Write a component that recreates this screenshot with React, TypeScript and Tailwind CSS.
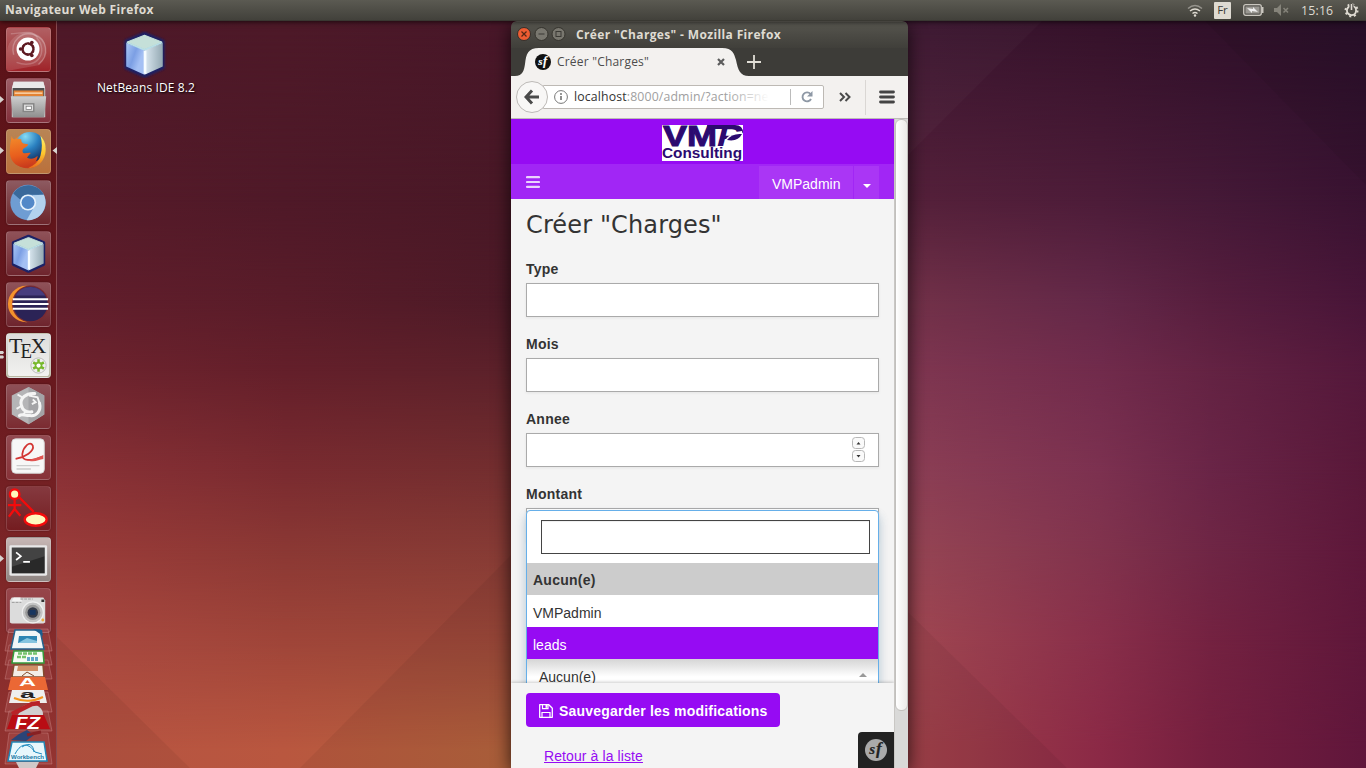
import React from 'react';

const ui = "font-['Open_Sans','Noto_Sans',sans-serif]";
const helv = "font-['Liberation_Sans',Arial,sans-serif]";

function Cube() {
  return (
    <svg viewBox="0 0 45 45" className="h-full w-full">
      <defs>
        <linearGradient id="cubeL" x2=".8" y2=".5"><stop stopColor="#a9c6f5" /><stop offset=".6" stopColor="#7c9fe4" /><stop offset="1" stopColor="#a4c0f4" /></linearGradient>
        <linearGradient id="cubeR"><stop stopColor="#dce9f2" /><stop offset="1" stopColor="#93a8b2" /></linearGradient>
        <filter id="cubeSoft" x="-.2" y="-.2" width="1.4" height="1.4"><feGaussianBlur stdDeviation=".9" /></filter>
      </defs>
      <path d="M22.500 2.500 40 10v25L22.500 43 5 35V10Z" fill="#1b2166" stroke="#1b2166" strokeWidth="3.500" strokeLinejoin="round" filter="url(#cubeSoft)" />
      <path d="M22.500 4 39 10.500 22.500 17.500 6 10.500Z" fill="#c5e0d9" stroke="#c5e0d9" strokeLinejoin="round" />
      <path d="M5 11.500 22.500 18v24L5 34Z" fill="url(#cubeL)" />
      <path d="M40 11.500 22.500 18v24L40 34Z" fill="url(#cubeR)" />
      <path d="M5.500 11 22.500 18 39.500 11" stroke="#b9dfe6" strokeWidth="1.500" fill="none" />
      <path d="M23 19v22" stroke="#f6fcff" strokeWidth="2.600" fill="none" />
    </svg>
  );
}

function UbuntuLogo() {
  return (
    <svg viewBox="0 0 45 45" className="h-full w-full">
      <path d="M0 45V30C-2 12 14 0 30 6c14 6 14 24 3 33Z" fill="#fff" opacity=".13" />
      <path d="M7 28C3 13 16 3 28 7c14 4 17 22 5 31" fill="none" stroke="#fff" strokeOpacity=".25" strokeWidth="1.500" />
      <path d="M10 36C32 44 44 25 31 10M4 6c9 0 22-5 28 4" fill="none" stroke="#fff" strokeOpacity=".2" strokeWidth="1.500" />
      <circle cx="22" cy="22" r="12" fill="#fff" />
      <circle cx="22" cy="22" r="5.700" fill="none" stroke="#5e1a22" strokeWidth="2.600" />
      <path d="m22 22-9 0M22 22l4.600-8M22 22l4.600 8" stroke="#fff" strokeWidth="5.500" />
      <circle cx="22" cy="22" r="4.300" fill="#fff" />
      <circle cx="22" cy="22" r="5.700" fill="none" stroke="#5e1a22" strokeWidth="2.600" strokeDasharray="8 3.940" transform="rotate(20 22 22)" />
      <circle cx="14.200" cy="22" r="1.900" fill="#5e1a22" />
      <circle cx="26" cy="15.200" r="1.900" fill="#5e1a22" />
      <circle cx="26" cy="28.800" r="1.900" fill="#5e1a22" />
    </svg>
  );
}

function Files() {
  return (
    <svg viewBox="0 0 45 45" className="h-full w-full">
      <path d="M7 3h31l2 8v29H5V11Z" fill="#d3d3d3" />
      <path d="M7 3h31l2 7H5Z" fill="#e9e9e9" />
      <path d="M6 9.500h33v9H6z" fill="#4f4f4f" />
      <path d="M7 12h31v6H7z" fill="#e38334" />
      <path d="M8 14h29v1.500H8z" fill="#ffe3c0" />
      <path d="M4 18h37l-2 22H6Z" fill="url(#filesG)" />
      <rect x="17" y="26" width="11" height="8" fill="#ddd" stroke="#858585" strokeWidth="1.500" />
      <rect x="20" y="28.500" width="5.500" height="3.500" fill="#fff" stroke="#777" strokeWidth=".8" />
      <defs><linearGradient id="filesG" x2="0" y2="1"><stop stopColor="#cfcfcf" /><stop offset="1" stopColor="#8f8f8f" /></linearGradient></defs>
    </svg>
  );
}

function Firefox() {
  return (
    <svg viewBox="0 0 45 45" className="h-full w-full">
      <defs>
        <radialGradient id="ffBlue" cx=".35" cy=".15" r=".95"><stop stopColor="#86dcf4" /><stop offset=".45" stopColor="#2a80c0" /><stop offset="1" stopColor="#10204e" /></radialGradient>
        <linearGradient id="ffOr" x1=".3" y1="0" x2=".5" y2="1"><stop stopColor="#f28a2a" /><stop offset=".6" stopColor="#e85e1d" /><stop offset="1" stopColor="#c93a1c" /></linearGradient>
        <linearGradient id="ffYe" x1="0" y1="0" x2="0" y2="1"><stop stopColor="#fff06a" /><stop offset=".55" stopColor="#fdc52e" /><stop offset="1" stopColor="#e96a1c" /></linearGradient>
      </defs>
      <circle cx="21.500" cy="22" r="18" fill="url(#ffOr)" />
      <circle cx="24" cy="18" r="16" fill="url(#ffBlue)" />
      <path d="M35 6c5 5 6.500 12 5 19-2 9-9 15-18 15 6-3 11-6 13-13 2-8 2-14 0-21Z" fill="url(#ffYe)" />
      <path d="M5 6c0 2 1.500 4 4 4 2-1 4-1 6 0 0 2 0 3 2 4l5 1c0 2-2 3-5 4.500-1 2-1 3 0 4.500 3 1 5-1 8 0-2 2-3 3-4 5 4 2 8 1 11-2 0 6-5 11-12 12C9 40 2 31 3 21c0-6 1-9 2-15Z" fill="url(#ffOr)" />
    </svg>
  );
}

function Chromium() {
  return (
    <svg viewBox="0 0 45 45" className="h-full w-full">
      <circle cx="22" cy="22.500" r="18.500" fill="#6f9dd3" />
      <path d="M6.500 13a18.500 18.500 0 0 1 32 1.500H22c-4 0-7 2-8 5Z" fill="#39699b" />
      <path d="M38.500 14.500a18.500 18.500 0 0 1-18 26.500l8-14c2-4 1-8-2-12Z" fill="#b2d2ee" />
      <circle cx="22" cy="22.500" r="8.500" fill="#e8f3fc" />
      <circle cx="22" cy="22.500" r="6.800" fill="#5288c8" />
    </svg>
  );
}

function Eclipse() {
  return (
    <svg viewBox="0 0 45 45" className="h-full w-full">
      <circle cx="20" cy="22" r="19" fill="#f4922c" />
      <circle cx="24.500" cy="22" r="19.300" fill="#7a2a32" />
      <circle cx="24.500" cy="22" r="18" fill="#2b2356" />
      <path d="M9 13a18 18 0 0 1 31 0Z" fill="#6a5db0" opacity=".45" />
      <path d="M6 17h37M5.500 22h38M6 27h37" stroke="#fff" strokeWidth="2.200" />
    </svg>
  );
}

function Tex() {
  return (
    <svg viewBox="0 0 45 45" className="h-full w-full">
      <rect x="1" y="1" width="43" height="43" rx="3" fill="url(#texG)" />
      <text x="2" y="20" fontFamily="Liberation Serif, serif" fontSize="23" fill="#222">T</text>
      <text x="14" y="25" fontFamily="Liberation Serif, serif" fontSize="21" textLength="12" lengthAdjust="spacingAndGlyphs" fill="#222">E</text>
      <text x="24.500" y="20" fontFamily="Liberation Serif, serif" fontSize="23" fill="#222">X</text>
      <circle cx="33" cy="33" r="8" fill="#eee" stroke="#bbb" />
      <g stroke="#78b82d" strokeWidth="2.600"><path d="M33 26.500v13M27.400 29.700l11.200 6.600M27.400 36.300l11.200-6.600" /></g>
      <circle cx="33" cy="33" r="4" fill="#77b82c" /><circle cx="33" cy="33" r="2.200" fill="#fff" />
      <defs><linearGradient id="texG" x2="0" y2="1"><stop stopColor="#dededc" /><stop offset="1" stopColor="#f1f1ef" /></linearGradient></defs>
    </svg>
  );
}

function Gecko() {
  return (
    <svg viewBox="0 0 45 45" className="h-full w-full">
      <path d="M22.500 2 39 11v20L22.500 41 5 31V11Z" fill="#b5b5b7" />
      <path d="M22.500 2 39 11v20L22.500 41Z" fill="#a3a3a6" />
      <path d="M29 9c-9-1-16 5-14 12 1 6 6 8 11 7M34 19c2 8-3 14-10 13-6 0-9-2-11 0" fill="none" stroke="#f4f4f4" strokeWidth="3.200" strokeLinecap="round" />
      <path d="m16 13-5-3M15 22l-5 3M20 27l-3 4M23 11l9 2 2 6M26 20l4-2-3-3" stroke="#f4f4f4" strokeWidth="2" fill="none" />
    </svg>
  );
}

function Evince() {
  return (
    <svg viewBox="0 0 45 45" className="h-full w-full">
      <rect x="5" y="3" width="34" height="36" rx="4" fill="#f7f7f7" stroke="#d4d4d4" />
      <path d="M9 24c10-2 20-8 18-14-3-6-10 2-11 9-1 8 10 7 20 3" fill="none" stroke="#d33634" strokeWidth="1.800" />
      <path d="M20 25c8 0 14-3 18-5v4c-5 1-10 4-18 1Z" fill="#e05451" />
      <path d="M10 31h24M10 34.500h15" stroke="#ccc" strokeWidth="1.500" />
    </svg>
  );
}

function StickTool() {
  return (
    <svg viewBox="0 0 45 45" className="h-full w-full">
      <g stroke="#f40b0b" strokeWidth="2.400" fill="none"><path d="M8 12v12M1 19h14M8 23l-6 8M8 23l6 7M13 11l15 15" /></g>
      <circle cx="8" cy="7.500" r="5" fill="#fff8bd" stroke="#f40b0b" strokeWidth="2.500" />
      <ellipse cx="30" cy="34" rx="11.500" ry="6.500" fill="#fff8bd" stroke="#f40b0b" strokeWidth="2.500" />
    </svg>
  );
}

function Terminal() {
  return (
    <svg viewBox="0 0 45 45" className="h-full w-full">
      <rect x="2.500" y="7.500" width="39.500" height="32" rx="1.500" fill="#e8e8e8" />
      <rect x="5" y="10" width="34.500" height="27" fill="#292929" />
      <path d="M5 10h34.500v9L5 30Z" fill="#fff" opacity=".12" />
      <path d="m9.500 15 5 4-5 4M17 25h7" fill="none" stroke="#fff" strokeWidth="1.800" />
    </svg>
  );
}

function Camera() {
  return (
    <svg viewBox="0 0 45 45" className="h-full w-full">
      <path d="m3 12 2-3h33l2 3v23l-2 1H5l-2-1Z" fill="#dcdcdc" />
      <path d="M7 9h7l2 4H5Z" fill="#f3f3f3" />
      <path d="M14 10.500h13M5 14h10" stroke="#999" strokeWidth="1" strokeDasharray="3 1" />
      <circle cx="27" cy="24.500" r="11" fill="#c5c5c5" stroke="#f0f0f0" strokeWidth="1.200" />
      <circle cx="27" cy="24.500" r="8" fill="#999" /><circle cx="27" cy="24.500" r="5.500" fill="#343a48" /><rect x="24" y="22" width="6" height="5" fill="#17355f" />
      <circle cx="37.500" cy="32.500" r="1.500" fill="#edab40" /><path d="M36 11h3v2.500h-3z" fill="#333" />
    </svg>
  );
}

const tile = 'mx-auto mb-[6px] h-[45px] w-[45px] shrink-0 overflow-hidden rounded-[4px] border border-[#ffffff26] bg-gradient-to-b shadow-[0_0_2px_#0005]';

function Launcher() {
  return (
    <aside className="relative flex h-full w-[57px] shrink-0 flex-col border-r border-[#8a4b51] bg-gradient-to-b from-[#5b1218] via-[#66171d] via-45% to-[#943431] pt-[6px]">
      <div className={`${tile} from-[#b16064] to-[#9f2229]`}><UbuntuLogo /></div>
      <div className={`${tile} from-[#9c5d66] to-[#822f3b]`}><Files /></div>
      <div className={`${tile} from-[#b88555] to-[#ba703b]`}><Firefox /></div>
      <div className={`${tile} from-[#8d5a61] to-[#6c242a]`}><Chromium /></div>
      <div className={`${tile} from-[#8f5259] to-[#6e242d] p-[2px]`}><Cube /></div>
      <div className={`${tile} from-[#8f5259] to-[#6e242d]`}><Eclipse /></div>
      <div className={`${tile} from-[#dedede] to-[#b9b8a2]`}><Tex /></div>
      <div className={`${tile} from-[#8d5057] to-[#7b2b31]`}><Gecko /></div>
      <div className={`${tile} from-[#924a51] to-[#873238]`}><Evince /></div>
      <div className={`${tile} from-[#85393f] to-[#741c20]`}><StickTool /></div>
      <div className={`${tile} from-[#c7b7b5] to-[#8f8582]`}><Terminal /></div>
      <div className={`${tile} from-[#96454a] to-[#8c383e]`}><Camera /></div>
      <svg viewBox="0 0 57 140" className="absolute bottom-0 left-0 h-[140px] w-[57px]">
        <g fill="#d98384" fillOpacity=".18" stroke="#e5aaa9" strokeOpacity=".3"><path d="M9 1h39l4 22H5zM9 17h39l4 20H5zM9 32h39l4 19H5zM9 64h39l4 20H5zM9 83h39l4 20H5zM9 105h39l4 31H5z" /></g>
        <path d="M15 2h25l4 19H11Z" fill="#f0f5f7" stroke="#24638e" strokeWidth="1.500" /><path d="m33 1 10 7-1-6Z" fill="#1a5d8f" /><path d="M19 8h18v7H18z" fill="#2d85b4" /><path d="m18 15 9-5 10 3v2Z" fill="#86c4df" />
        <path d="M14 23h29l1 12H12Z" fill="#f6fbf3" stroke="#329c3b" strokeWidth="1.500" /><path d="M18 25.500h19M17 29h9" stroke="#74c26c" strokeWidth="2.600" strokeDasharray="4 1" /><path d="M27 31h11" stroke="#62a5c9" strokeWidth="4" strokeDasharray="3 1" />
        <path d="M14 37h29l1 12H12Z" fill="#f3eee7" stroke="#844b2d" strokeWidth="1.500" /><path d="M18 38h20v5H17z" fill="#d29068" /><path d="m22 48 5-4 7 4" stroke="#844b2d" fill="none" />
        <path d="M11 49h34l3 13H8Z" fill="#eb6835" /><text x="19" y="58" fontFamily="Liberation Sans" fontWeight="bold" fontSize="11" textLength="17" lengthAdjust="spacingAndGlyphs" fill="#fff">A</text>
        <path d="M12 62h32l3 13H9Z" fill="#eee" /><text x="20" y="69.500" fontFamily="Liberation Sans" fontWeight="bold" fontSize="10" textLength="15" lengthAdjust="spacingAndGlyphs" fill="#222">a</text><path d="M14 70q14 6 29-1" stroke="#f39420" strokeWidth="2" fill="none" />
        <path d="M22 79c8-7 22-1 21 8H18Z" fill="#d1cfd0" /><path d="m12 86 20-10 8-1" stroke="#b82228" strokeWidth="4.500" fill="none" />
        <path d="M12 87h32l6 14H7Z" fill="#b90d14" /><text x="15" y="101" fontFamily="Liberation Sans" fontWeight="bold" fontStyle="italic" fontSize="17" textLength="25" lengthAdjust="spacingAndGlyphs" fill="#fff">FZ</text>
        <path d="m11 112 8-6 8-4 7 5-8 6Z" fill="#294477" /><path d="m27 107 14-3" stroke="#872023" strokeWidth="3" />
        <path d="M12 114h32l3 19H8Z" fill="#e8f7fc" stroke="#2186b5" strokeWidth="1.500" /><path d="M15 126c7-13 14-10 20-2l7 2M22 119c8-5 11-2 12 5" stroke="#1988be" strokeWidth="1" fill="none" />
        <text x="11" y="131" fontFamily="Liberation Sans" fontWeight="bold" fontSize="5" textLength="33" lengthAdjust="spacingAndGlyphs" fill="#1777a5">Workbench</text>
        <path d="M16 134h23l-3 6H19Z" fill="#d0c9c8" />
      </svg>
      <svg viewBox="0 0 57 560" className="absolute left-0 top-0 h-[560px] w-[57px]" fill="#d7d3cf">
        <path d="M0 75v7l4-3.500ZM0 126v7l4-3.500ZM57 126v7l-4.500-3.500ZM0 534v7l4-3.500ZM0 330h3l1 1.500-1 1.500H0ZM0 334.500h3l1 1.500-1 1.500H0Z" />
      </svg>
    </aside>
  );
}

function TopBar() {
  return (
    <header className={`${ui} flex h-[21px] w-full items-center justify-between border-b border-[#393832] bg-gradient-to-b from-[#5b5a52] to-[#42413b] pl-[5px] pr-[7px] text-[12.5px] text-[#dfdbd2] shadow-[0_1px_5px_#000a]`}>
      <span className="text-[12px] font-bold leading-[20px] tracking-[0.330px]">Navigateur Web Firefox</span>
      <div className="flex items-center">
        <svg width="16" height="13" viewBox="0 0 16 13" fill="none" strokeWidth="1.500"><path d="M1 4.500q7-6 14 0" stroke="#96948d" /><path d="M3 7q5-4 10 0M5.500 9.500q2.500-2 5 0" stroke="#dfdbd2" /><circle cx="8" cy="11.500" r="1.200" fill="#dfdbd2" /></svg>
        <span className="ml-[11px] flex h-[17px] w-[17px] items-center justify-center rounded-[1px] bg-[#dfdbd2] text-[11.500px] text-[#3c3b37]">Fr</span>
        <svg className="ml-[12px]" width="21" height="12" viewBox="0 0 21 12"><rect x=".7" y=".7" width="17.600" height="10.600" rx="2" fill="#55534e" stroke="#c9c6be" strokeWidth="1.300" /><rect x="2.500" y="2.500" width="14" height="7" fill="#999791" /><path d="m4 4 6 1V3l5 5-6-1v2Z" fill="#eee" /><path d="M19 3v6h1.500V3Z" fill="#c9c6be" /></svg>
        <svg className="ml-[10px]" width="16" height="12" viewBox="0 0 16 12"><path d="M0 4h3l4-4v12L3 8H0Z" fill="#85837a" /><path d="m9.500 4 4.500 4.500m0-4.500L9.500 8.500" stroke="#85837a" strokeWidth="1.500" /></svg>
        <span className="ml-[11px] w-[33px] pt-px text-[12.300px] leading-[20px] tracking-[0.200px]">15:16</span>
        <svg className="ml-[10px]" width="15" height="15" viewBox="0 0 15 15"><circle cx="7.500" cy="7.500" r="4.600" fill="none" stroke="#dfdbd2" strokeWidth="1.800" /><circle cx="7.500" cy="7.500" r="6" fill="none" stroke="#dfdbd2" strokeWidth="2" strokeDasharray="2 2.710" /><path d="M5.500 1h4v5h-4z" fill="#4c4b45" /><path d="M7.500 1v6" stroke="#dfdbd2" strokeWidth="1.600" /></svg>
      </div>
    </header>
  );
}

function Symfony({ size, bg, fg }: { size: number; bg: string; fg: string }) {
  return (
    <svg width={size} height={size} viewBox="0 0 22 22">
      <circle cx="11" cy="11" r="11" fill={bg} />
      <text x="4.300" y="15" fontFamily="Liberation Serif, serif" fontStyle="italic" fontWeight="bold" fontSize="17" fill={fg} stroke={fg} strokeWidth=".2">
        <tspan fontSize="15">s</tspan><tspan dx=".8" fontSize="17">f</tspan>
      </text>
    </svg>
  );
}

function Chrome() {
  return (
    <>
      <div className={`${ui} flex h-[27px] items-center rounded-t-[5px] border-t border-[#706e65] bg-gradient-to-b from-[#57564f] to-[#403f3a] pl-[6px]`}>
        <svg width="50" height="14" viewBox="0 0 50 14" className="-mt-[2px]">
          <circle cx="7" cy="7" r="6.500" fill="#ee5c32" stroke="#33302d" /><path d="m4.500 4.500 5 5m0-5-5 5" stroke="#542715" strokeWidth="1.200" />
          <circle cx="24.500" cy="7" r="6.500" fill="#79776f" stroke="#37352f" /><path d="M21.500 7h6" stroke="#3a3934" strokeWidth="1.200" />
          <circle cx="41.500" cy="7" r="6.500" fill="#79776f" stroke="#37352f" /><rect x="39" y="4.500" width="5" height="5" fill="none" stroke="#3a3934" />
        </svg>
        <span className="ml-[9px] text-[12px] font-bold leading-[20px] tracking-[0.360px] text-[#dfdbd2]">Créer "Charges" - Mozilla Firefox</span>
      </div>
      <div className={`${ui} relative h-[28px] bg-[#3d3c38]`}>
        <svg className="absolute left-0 top-0" width="250" height="28" viewBox="0 0 250 28"><path d="M0 28H4C12 28 13 22 14 16C15 6 17 0 28 0H211C222 0 223 6 225 12C227 22 229 28 238 28Z" fill="#f3f1ef" /></svg>
        <div className="relative flex h-[27px] items-center pl-[24px]">
          <Symfony size={16} bg="#111" fg="#fff" />
          <span className="ml-[6px] w-[160px] text-[12px] tracking-[0.200px] text-[#4c4c4c]">Créer "Charges"</span>
          <svg width="8" height="8" viewBox="0 0 8 8"><path d="m1 1 6 6m0-6L1 7" stroke="#5c5c5c" strokeWidth="2.200" /></svg>
          <svg className="ml-[22px]" width="14" height="14" viewBox="0 0 14 14"><path d="M7 0v14M0 7h14" stroke="#e1ded6" strokeWidth="1.800" /></svg>
        </div>
      </div>
      <div className={`${ui} flex h-[43px] items-center border-b border-[#bdbab7] bg-[#f3f1ef] pl-[5px]`}>
        <div className="z-10 flex h-[32px] w-[32px] shrink-0 items-center justify-center rounded-full border border-[#bdbab7] bg-[#f8f7f6]">
          <svg width="16" height="16" viewBox="0 0 16 16"><path d="M8 1.500 2 8l6 6.500M2 8h13" fill="none" stroke="#4a4a4a" strokeWidth="3" /></svg>
        </div>
        <div className="-ml-[5px] flex h-[24px] w-[281px] shrink-0 items-center rounded-r-[2px] border border-[#bdb9b4] bg-white pl-[10px]">
          <svg width="14" height="14" viewBox="0 0 14 14"><circle cx="7" cy="7" r="6.400" fill="none" stroke="#777" /><path d="M7 6v4" stroke="#666" strokeWidth="1.500" /><circle cx="7" cy="4" r=".9" fill="#666" /></svg>
          <div className="relative ml-[6px] w-[195px] overflow-hidden whitespace-nowrap pt-px text-[12.300px] tracking-[0.140px] text-[#a0a0a0]"><span className="text-[#333]">localhost</span>:8000/admin/?action=ne<span className="absolute inset-y-0 right-0 w-[42px] bg-gradient-to-r from-transparent to-white" /></div>
          <span className="ml-[21px] h-[16px] w-px bg-[#bbb]" />
          <svg className="ml-[10px]" width="12" height="12" viewBox="0 0 12 12"><path d="M10 8a4.500 4.500 0 1 1-.5-5" fill="none" stroke="#8e98a5" strokeWidth="1.900" /><path d="M11.500 0v5.500H6Z" fill="#8e98a5" /></svg>
        </div>
        <svg className="ml-[15px]" width="12" height="10" viewBox="0 0 12 10"><path d="m1 1 4 4-4 4M6.500 1l4 4-4 4" fill="none" stroke="#4a4a4a" strokeWidth="2" /></svg>
        <span className="ml-[14px] h-[35px] w-px bg-[#dad7d4]" />
        <svg className="ml-[13px]" width="16" height="14" viewBox="0 0 16 14"><path d="M1.500 2h13M1.500 7h13M1.500 12h13" stroke="#444" strokeWidth="2.800" strokeLinecap="round" /></svg>
      </div>
    </>
  );
}

function Logo() {
  return (
    <svg width="81" height="36" viewBox="0 0 81 36" className="bg-white">
      <g fontFamily="Liberation Sans, sans-serif" fontWeight="bold" fill="#2c0a70">
        <text x="1" y="21" fontSize="30" textLength="54" lengthAdjust="spacingAndGlyphs" stroke="#2c0a70">VM</text>
        <text x="55" y="21" fontSize="30" fontStyle="italic" textLength="25" lengthAdjust="spacingAndGlyphs">P</text>
        <path d="M45 0h28q8 0 8 8l-3-2q-3-2-8-2H46Z" />
        <path d="M63 17q3-10 17-11v8q-6 7-17 3Z" fill="#fff" />
        <path d="M65 15q5-7 15-6-4 8-15 6Z" />
        <text x="0" y="32.500" fontSize="14.500" textLength="80" lengthAdjust="spacingAndGlyphs">Consulting</text>
      </g>
    </svg>
  );
}

function SaveIcon() {
  return (
    <svg width="14" height="14" viewBox="0 0 14 14" className="mr-[6px] shrink-0">
      <path d="M.7.7h9.100L13.300 4.200v9.100H.7Z" fill="none" stroke="#fff" strokeWidth="1.300" strokeLinejoin="round" />
      <path d="M3.500.7v4h5.500v-4M3 13.300V8.500h8v4.800" fill="none" stroke="#fff" strokeWidth="1.200" />
      <path d="M6.500 1h1.800v2.800H6.500Z" fill="#fff" />
    </svg>
  );
}

function Field({ label, number }: { label: string; number?: boolean }) {
  return (
    <div className="h-[75px]">
      <label className="block h-[25px] pt-px text-[14px] font-bold leading-[20px] tracking-[0.250px] text-[#333]">{label}</label>
      <div className="flex h-[34px] items-center justify-end border border-[#aaa] bg-white pr-[13px] shadow-[0_1px_3px_#0001]">
        {number && (
          <svg width="13" height="26" viewBox="0 0 13 26"><rect x=".5" y=".5" width="12" height="11" rx="3" fill="#fafafa" stroke="#b7b7b7" /><rect x=".5" y="13.500" width="12" height="11" rx="3" fill="#fafafa" stroke="#b7b7b7" /><path d="m4.500 7.500 2-2.500 2 2.500ZM4.500 18l2 2.500 2-2.500Z" fill="#333" /></svg>
        )}
      </div>
    </div>
  );
}

function Page() {
  return (
    <div className="flex h-[649px]">
      <main className={`${helv} relative flex w-[383px] flex-col overflow-hidden bg-[#f4f4f4]`}>
        <div className="flex h-[45px] shrink-0 items-center justify-center bg-[#960bf3] pt-[3px]"><Logo /></div>
        <div className="flex h-[35px] shrink-0 items-end justify-between bg-[#a126f5] px-[15px]">
          <svg width="14" height="12" viewBox="0 0 14 12" className="mb-[11px]"><path d="M1 1.200h12M1 6h12M1 10.800h12" stroke="#ead2fd" strokeWidth="2.200" strokeLinecap="round" /></svg>
          <div className="flex h-[33px] items-center bg-[#aa36f5] text-[14px] text-white">
            <span className="flex h-full w-[95px] items-center border-r border-[#a126f5] pl-[13px] pt-[4px]">VMPadmin</span>
            <span className="flex w-[25px] justify-center pt-[6px]"><svg width="8" height="4" viewBox="0 0 8 4"><path d="M0 0h8L4 4Z" fill="#fff" /></svg></span>
          </div>
        </div>
        <h1 className="h-[59px] shrink-0 pl-[15px] pt-[9px] font-['DejaVu_Sans',sans-serif] text-[24px] leading-[34px] tracking-[0.130px] text-[#333]">Créer "Charges"</h1>
        <form className="shrink-0 px-[15px]"><Field label="Type" /><Field label="Mois" /><Field label="Annee" number /><Field label="Montant" /></form>
        <div className="absolute left-[15px] top-[391px] w-[353px] rounded-t-[4px] border border-[#66afe9] bg-white text-[14px] leading-[20px] text-[#333] shadow-[0_6px_8px_#66afe944,0_6px_12px_#0002]">
          <div className="h-[52px] pl-[14px] pr-[8px] pt-[9px]"><div className="h-[34px] border border-[#444] bg-white shadow-[inset_0_1px_1px_#0001]" /></div>
          <div className="h-[32px] bg-[#ccc] px-[6px] pt-[7px] font-bold tracking-[0.250px]">Aucun(e)</div>
          <div className="h-[32px] px-[6px] pt-[8px]">VMPadmin</div>
          <div className="h-[32px] bg-[#960bf3] px-[6px] pt-[8px] text-white">leads</div>
          <div className="flex h-[44px] items-center justify-between bg-gradient-to-b from-[#d5d5d5] to-white to-40% pb-[9px] pl-[12px] pr-[11px]"><span>Aucun(e)</span><svg width="8" height="4" viewBox="0 0 8 4" className="-mt-[4px]"><path d="M0 4h8L4 0Z" fill="#999" /></svg></div>
        </div>
        <footer className="absolute inset-x-0 bottom-0 flex h-[85px] flex-col items-start bg-[#f4f4f4] pl-[15px] pt-[10px] text-[14px] leading-[20px] shadow-[0_-1px_3px_#0003]">
          <button className="flex h-[34px] w-[254px] items-center rounded-[4px] bg-[#960bf3] pl-[13px] pt-px font-bold text-white"><SaveIcon /><span className="whitespace-nowrap tracking-[0.190px]">Sauvegarder les modifications</span></button>
          <a className="ml-[18px] mt-[19px] tracking-[0.100px] text-[#960bf3] underline">Retour à la liste</a>
        </footer>
        <div className="absolute bottom-0 right-0 flex h-[36px] w-[36px] items-center justify-center rounded-tl-[4px] bg-[#222]"><Symfony size={22} bg="#aaa" fg="#222" /></div>
      </main>
      <div className="w-[14px] border-l border-[#c9c7c4] bg-[#d9d9d8]"><div className="h-[592px] rounded-[6px] border border-[#c2c0bd] bg-gradient-to-r from-white to-[#eceae8]" /></div>
    </div>
  );
}

const columns = [57, 285, 505, 930, 1100, 1210, 1366];
const wallpaper = [
  { y: 21, c: ['#4e1828', '#4d1928', '#481729', '#3a152f', '#35122a', '#301029', '#29102a'] },
  { y: 200, c: ['#571b29', '#4f1928', '#491826', '#54203a', '#4d1c39', '#451937', '#391231'] },
  { y: 300, c: ['#621e2c', '#591c29', '#4d1a27', '#703048', '#632848', '#571e3e', '#481538'] },
  { y: 370, c: ['#6f242e', '#641f2a', '#5c212a', '#7d3550', '#712b4c', '#642343', '#54183b'] },
  { y: 470, c: ['#8a3136', '#7a2b30', '#732e2f', '#8a3d54', '#7c3150', '#6a2547', '#591839'] },
  { y: 550, c: ['#9a3b39', '#8b3834', '#863b35', '#934353', '#81334d', '#6f2645', '#5d173a'] },
  { y: 640, c: ['#aa4840', '#9f4539', '#9a4839', '#9d4450', '#892f4a', '#742241', '#5f173a'] },
  { y: 750, c: ['#b65342', '#b9573f', '#b2623d', '#9f4049', '#8b2946', '#751f3f', '#60163b'] },
];

function Wallpaper() {
  return (
    <svg className="absolute inset-0 h-full w-full" viewBox="0 0 1366 768">
      <defs>
        {wallpaper.map((row, i) => (
          <React.Fragment key={row.y}>
            <linearGradient id={`row${i}`} gradientUnits="userSpaceOnUse" x1="57" y1="0" x2="1366" y2="0">
              {row.c.map((c, j) => <stop key={j} offset={(columns[j] - 57) / 1309} stopColor={c} />)}
            </linearGradient>
            {i > 0 && (
              <>
                <linearGradient id={`fade${i}`} gradientUnits="userSpaceOnUse" x1="0" x2="0" y1={wallpaper[i - 1].y} y2={row.y}><stop stopColor="#fff" stopOpacity="0" /><stop offset="1" stopColor="#fff" /></linearGradient>
                <mask id={`mask${i}`} maskUnits="userSpaceOnUse" x="0" y="0" width="1366" height="768"><rect width="1366" height="768" fill={`url(#fade${i})`} /></mask>
              </>
            )}
          </React.Fragment>
        ))}
      </defs>
      {wallpaper.map((row, i) => <rect key={row.y} width="1366" height="768" fill={`url(#row${i})`} mask={i > 0 ? `url(#mask${i})` : undefined} style={{ maskType: 'alpha' } as React.CSSProperties} />)}
      <path d="M57 637 190 768H57ZM300 768 511 555V768ZM908 612 1067 768H908ZM1205 21 1366 185V21Z" fill="#000" opacity=".05" />
      <path d="M908 21H1042L908 155Z" fill="#fff" opacity=".025" />
    </svg>
  );
}

export default function App() {
  return (
    <div className="relative flex h-screen w-full flex-col overflow-hidden bg-[#4e1828]">
      <Wallpaper />
      <div className="relative z-10"><TopBar /></div>
      <div className="relative flex h-[747px]">
        <Launcher />
        <div className={`${ui} absolute left-[86px] top-[10px] flex w-[120px] flex-col items-center text-[12px] text-white`}>
          <div className="mr-[3px] h-[47px] w-[47px]"><Cube /></div>
          <span className="whitespace-nowrap leading-[20px] tracking-[0.120px] [text-shadow:1px_1px_2px_#000]">NetBeans IDE 8.2</span>
        </div>
        <section className="absolute left-[511px] top-0 w-[397px] overflow-hidden rounded-t-[6px] shadow-[0_4px_18px_#000b]"><Chrome /><Page /></section>
      </div>
    </div>
  );
}
